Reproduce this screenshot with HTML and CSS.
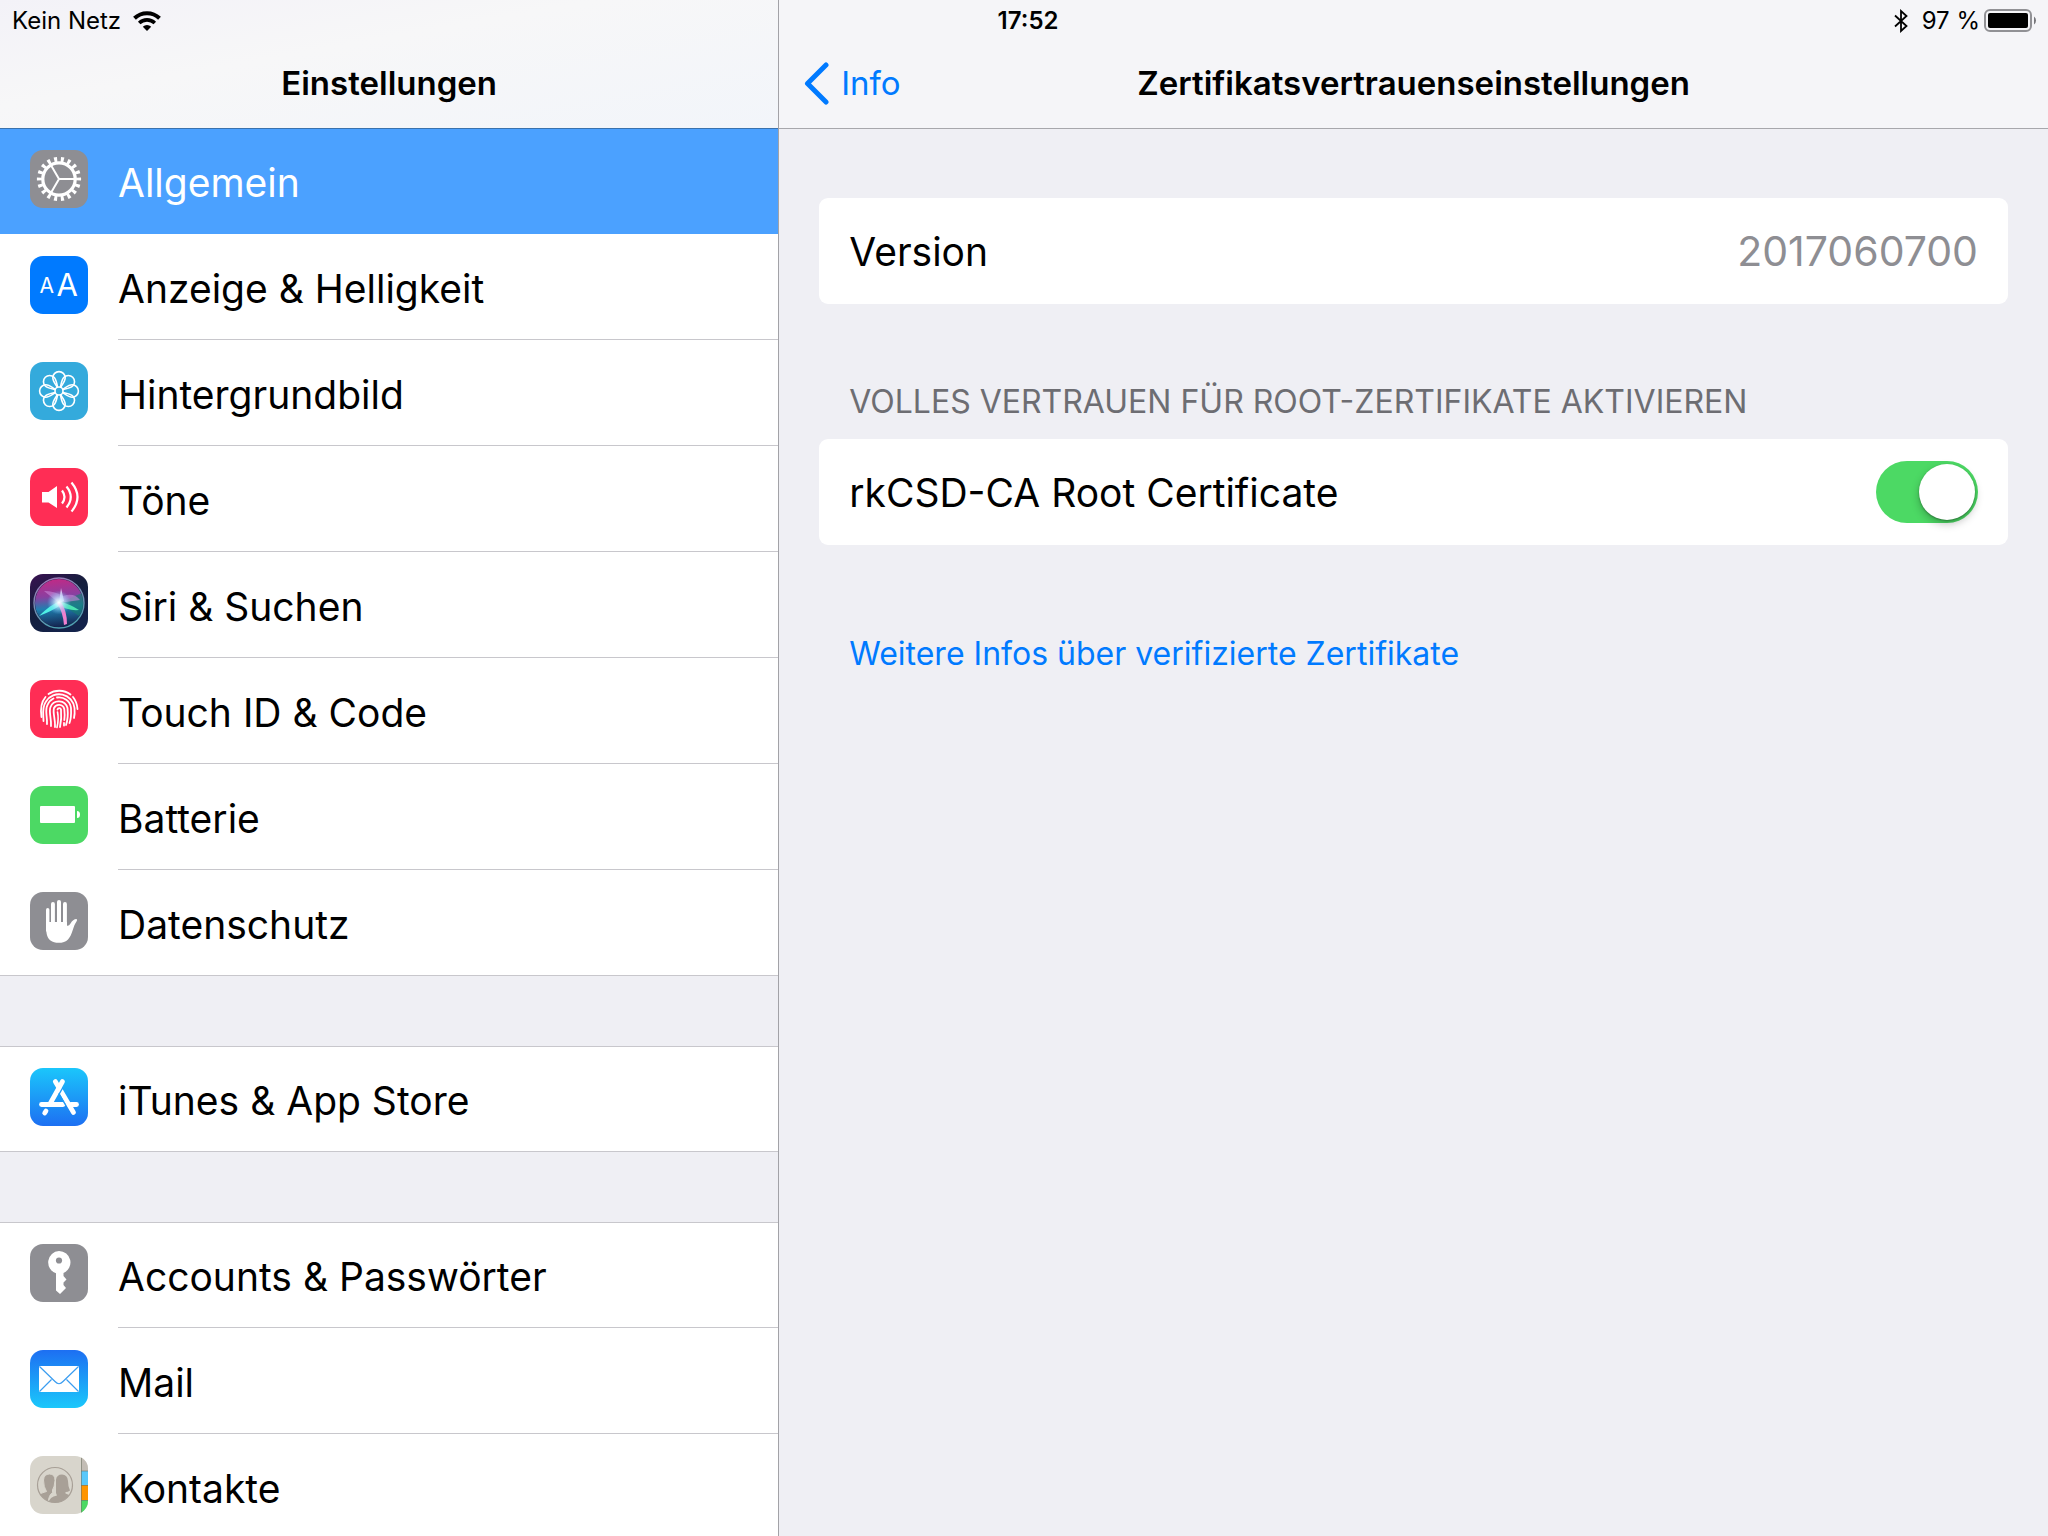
FILE: index.html
```html
<!DOCTYPE html>
<html lang="de">
  <head>
    <meta charset="UTF-8" />
    <meta name="viewport" content="width=device-width, initial-scale=1.0" />
    <title>Einstellungen</title>
    <link rel="stylesheet" href="styles.css">
  </head>
  <body>
    <div class="status-bar">
      <div class="status-left">
        <span>Kein Netz</span>
        <svg class="wifi" width="28" height="20" viewBox="0 0 28 20" aria-hidden="true">
          <path d="M1.5 7.2 A18 18 0 0 1 26.5 7.2" fill="none" stroke="#000" stroke-width="4" />
          <path d="M6.2 12 A11.3 11.3 0 0 1 21.8 12" fill="none" stroke="#000" stroke-width="3.6" />
          <path d="M14 20 L9.8 15.8 A6 6 0 0 1 18.2 15.8 Z" />
        </svg>
      </div>
      <time class="clock">17:52</time>
      <div class="status-right">
        <svg class="bluetooth" width="14" height="24" viewBox="0 0 14 24" aria-hidden="true">
          <path d="M1 6.5 L12.5 17 L7 22 V2 L12.5 7 L1 17.5" fill="none" stroke="#000" stroke-width="1.8" />
        </svg>
        <span>97 %</span>
        <svg class="battery" width="53" height="23" viewBox="0 0 53 23" aria-hidden="true">
          <rect x="1" y="1" width="46" height="21" rx="5" fill="none" stroke="#919195" stroke-width="2" />
          <rect x="4" y="4" width="40" height="15" rx="2" />
          <path d="M50 7.5 a5 5 0 0 1 0 8 Z" fill="#77777b" />
        </svg>
      </div>
    </div>

    <div class="split">
      <aside class="sidebar">
        <header class="navbar sidebar-navbar">
          <h1>Einstellungen</h1>
        </header>
        <nav>
          <ul class="group">
            <li>
              <a class="row active" href="#allgemein">
                <svg class="icon" viewBox="0 0 58 58" aria-hidden="true">
                  <rect width="58" height="58" rx="13" fill="#8e8e93" />
                  <g fill="none" stroke="#fff">
                    <circle cx="29" cy="29" r="19.6" stroke-width="5" pathLength="180" stroke-dasharray="4.4 5.6" stroke-dashoffset="2.2" />
                    <circle cx="29" cy="29" r="16.2" stroke-width="3.2" />
                    <path d="M29 29 H45 M29 29 L21 15.2 M29 29 L21 42.8" stroke-width="2" />
                  </g>
                </svg>
                <span>Allgemein</span>
              </a>
            </li>
            <li>
              <a class="row" href="#anzeige">
                <svg class="icon" viewBox="0 0 58 58" aria-hidden="true">
                  <rect width="58" height="58" rx="13" fill="#007aff" />
                  <text class="icon-text" x="9.5" y="37" font-size="21">A</text>
                  <text class="icon-text" x="26.5" y="40" font-size="31">A</text>
                </svg>
                <span>Anzeige &amp; Helligkeit</span>
              </a>
            </li>
            <li>
              <a class="row" href="#hintergrundbild">
                <svg class="icon" viewBox="0 0 58 58" aria-hidden="true">
                  <defs>
                    <path id="petal" d="M29 9.6 A6.2 6.2 0 0 1 35.2 15.8 C35.2 19.5 32.5 22 29 28 C25.5 22 22.8 19.5 22.8 15.8 A6.2 6.2 0 0 1 29 9.6 Z" />
                  </defs>
                  <rect width="58" height="58" rx="13" fill="#34aadc" />
                  <g fill="none" stroke="#fff" stroke-width="1.6">
                    <use href="#petal" />
                    <use href="#petal" transform="rotate(45 29 29)" />
                    <use href="#petal" transform="rotate(90 29 29)" />
                    <use href="#petal" transform="rotate(135 29 29)" />
                    <use href="#petal" transform="rotate(180 29 29)" />
                    <use href="#petal" transform="rotate(225 29 29)" />
                    <use href="#petal" transform="rotate(270 29 29)" />
                    <use href="#petal" transform="rotate(315 29 29)" />
                    <circle cx="29" cy="29" r="4" fill="#34aadc" />
                  </g>
                </svg>
                <span>Hintergrundbild</span>
              </a>
            </li>
            <li>
              <a class="row" href="#toene">
                <svg class="icon" viewBox="0 0 58 58" aria-hidden="true">
                  <rect width="58" height="58" rx="13" fill="#ff2d55" />
                  <path d="M12 24 H18.5 L27 18 V40 L18.5 34.5 H12 Z" fill="#fff" />
                  <g fill="none" stroke="#fff" stroke-width="2.2">
                    <path d="M32 22.5 Q37 29 32 35.5" />
                    <path d="M36.5 18.5 Q45 29 36.5 39.5" />
                    <path d="M41.5 14.5 Q53.5 29 41.5 43.5" />
                  </g>
                </svg>
                <span>Töne</span>
              </a>
            </li>
            <li>
              <a class="row" href="#siri">
                <svg class="icon" viewBox="0 0 58 58" aria-hidden="true">
                  <defs>
                    <linearGradient id="siri-bg" x1="0" y1="0" x2="0.6" y2="1">
                      <stop offset="0" stop-color="#3a1152" />
                      <stop offset="0.5" stop-color="#141e3c" />
                      <stop offset="1" stop-color="#13224a" />
                    </linearGradient>
                    <linearGradient id="siri-orb" x1="0.4" y1="0" x2="0.5" y2="1">
                      <stop offset="0" stop-color="#c02a86" />
                      <stop offset="0.35" stop-color="#8a3fa0" />
                      <stop offset="0.6" stop-color="#1f7fb0" />
                      <stop offset="1" stop-color="#14234f" />
                    </linearGradient>
                    <radialGradient id="siri-glow">
                      <stop offset="0" stop-color="#fff" />
                      <stop offset="0.3" stop-color="#d5f4ff" stop-opacity="0.8" />
                      <stop offset="1" stop-color="#6fc6ff" stop-opacity="0" />
                    </radialGradient>
                    <linearGradient id="siri-ring" x1="0" y1="0" x2="0.3" y2="1">
                      <stop offset="0" stop-color="#a574b8" />
                      <stop offset="1" stop-color="#4f9fb0" />
                    </linearGradient>
                  </defs>
                  <rect width="58" height="58" rx="13" fill="url(#siri-bg)" />
                  <circle cx="29" cy="29" r="24" fill="url(#siri-orb)" />
                  <path d="M29 29 L52 19 A24 24 0 0 1 49 42 Z" fill="#16806f" opacity="0.6" />
                  <path d="M29 29 L14 17 Q24 17 33 22 Q44 18 50 26 Z" fill="#c887d8" opacity="0.6" />
                  <path d="M29 29 L31 14 L34 27 Z" fill="#f3ddff" opacity="0.8" />
                  <path d="M30 27 Q20 31 9 42 Q22 37 31 31 Z" fill="#4ff0e4" />
                  <path d="M28 27 Q40 30 49 36 Q38 37 28 31 Z" fill="#4be3b2" />
                  <path d="M27 29 Q33 38 34 51 L37 50 Q37 37 31 28 Z" fill="#f080cf" />
                  <circle cx="29" cy="28.5" r="12" fill="url(#siri-glow)" />
                  <circle cx="29" cy="29" r="25" fill="none" stroke="url(#siri-ring)" stroke-width="1.4" />
                </svg>
                <span>Siri &amp; Suchen</span>
              </a>
            </li>
            <li>
              <a class="row" href="#touchid">
                <svg class="icon" viewBox="0 0 58 58" aria-hidden="true">
                  <rect width="58" height="58" rx="13" fill="#ff2d55" />
                  <g fill="none" stroke="#fff" stroke-width="1.8" stroke-linecap="round">
                    <path d="M18.5 14 A19 19 0 0 1 40.5 14.5" />
                    <path d="M43 17 Q47 22 47.5 29" />
                    <path d="M11.5 37 Q9.5 24 15.5 17" />
                    <path d="M13.5 41 C13.5 35 11.5 28 16 21.5 A15.5 15.5 0 0 1 44.5 28 Q45 34 44 38" />
                    <path d="M17 44 C17.5 36 14.5 30 17.5 25 A12.3 12.3 0 0 1 23.5 18.5" />
                    <path d="M27 17.5 A12 12 0 0 1 41 28 Q41.5 38 39.5 43" />
                    <path d="M21 46 C21.5 38 18.5 32 20.5 27 A9 9 0 0 1 37.5 28 Q38.5 38 36 45" />
                    <path d="M25 47 C25.5 39 22.5 33 24 28 A5.5 5.5 0 0 1 34.3 29 Q35 35 34.3 40" />
                    <path d="M34 43 V45.5" />
                    <path d="M27.5 29.5 A1.8 1.8 0 0 1 31 29.5 Q31.8 39 30 47" />
                    <path d="M27.5 32 Q29 39 27 47.5" stroke-width="1.6" />
                  </g>
                </svg>
                <span>Touch ID &amp; Code</span>
              </a>
            </li>
            <li>
              <a class="row" href="#batterie">
                <svg class="icon" viewBox="0 0 58 58" aria-hidden="true">
                  <rect width="58" height="58" rx="13" fill="#4cd964" />
                  <rect x="10" y="20" width="35" height="17" rx="1" fill="#fff" />
                  <path d="M47 25 Q50 25 50 28.5 Q50 32 47 32 Z" fill="#fff" />
                </svg>
                <span>Batterie</span>
              </a>
            </li>
            <li>
              <a class="row" href="#datenschutz">
                <svg class="icon" viewBox="0 0 58 58" aria-hidden="true">
                  <rect width="58" height="58" rx="13" fill="#8e8e93" />
                  <g fill="#fff">
                    <rect x="16" y="16" width="3.4" height="24" rx="1.7" />
                    <rect x="21" y="10" width="3.9" height="30" rx="1.9" />
                    <rect x="27" y="8" width="4" height="30" rx="2" />
                    <rect x="33" y="10" width="3.9" height="30" rx="1.9" />
                    <path d="M16 30 H36.9 V33.5 Q38.5 34.5 40.5 31.5 Q43 27 46.5 27 Q47.8 27.8 46.5 29.5 C43 34 42.5 43 38 47.5 C34.5 51.5 25 52 20.5 48.5 C16.5 45.5 16 40 16 30 Z" />
                  </g>
                </svg>
                <span>Datenschutz</span>
              </a>
            </li>
          </ul>
          <ul class="group">
            <li>
              <a class="row" href="#appstore">
                <svg class="icon" viewBox="0 0 58 58" aria-hidden="true">
                  <defs>
                    <linearGradient id="store-bg" x1="0" y1="0" x2="0" y2="1">
                      <stop offset="0" stop-color="#1bc6fb" />
                      <stop offset="1" stop-color="#1d6ff2" />
                    </linearGradient>
                  </defs>
                  <rect width="58" height="58" rx="13" fill="url(#store-bg)" />
                  <g fill="none" stroke="#fff" stroke-width="4.8" stroke-linecap="round">
                    <path d="M32.5 13.5 L20.5 35" />
                    <path d="M16 43 L14.7 45" />
                    <path d="M11.5 36.5 H33" />
                    <path d="M41 36.5 H46.5" />
                    <path d="M25.3 13.5 L43.5 44.5" />
                  </g>
                  <path d="M32.6 20 L29.2 26 L35.8 37.5" fill="none" stroke="#1c9af7" stroke-width="1.4" />
                </svg>
                <span>iTunes &amp; App Store</span>
              </a>
            </li>
          </ul>
          <ul class="group">
            <li>
              <a class="row" href="#accounts">
                <svg class="icon" viewBox="0 0 58 58" aria-hidden="true">
                  <rect width="58" height="58" rx="13" fill="#8e8e93" />
                  <path d="M29 7 A11.4 11.4 0 0 1 33.5 28.9 V32 L36.5 35.5 L33.5 38.5 V41 L36 44 L30 50 L26 46.5 V29.2 A11.4 11.4 0 0 1 29 7 Z" fill="#fff" />
                  <circle cx="29" cy="16.5" r="3.1" fill="#8e8e93" />
                </svg>
                <span>Accounts &amp; Passwörter</span>
              </a>
            </li>
            <li>
              <a class="row" href="#mail">
                <svg class="icon" viewBox="0 0 58 58" aria-hidden="true">
                  <defs>
                    <linearGradient id="mail-bg" x1="0" y1="0" x2="0" y2="1">
                      <stop offset="0" stop-color="#1d6ff2" />
                      <stop offset="1" stop-color="#1bc8fb" />
                    </linearGradient>
                  </defs>
                  <rect width="58" height="58" rx="13" fill="url(#mail-bg)" />
                  <rect x="9" y="16" width="40" height="26" rx="1" fill="#fff" />
                  <path d="M9.5 16.5 L25 31.5 Q29 36 33 31.5 L48.5 16.5 M9.5 41.5 L21.5 29.5 M48.5 41.5 L36.5 29.5" fill="none" stroke="#3b9df0" stroke-width="1.2" />
                </svg>
                <span>Mail</span>
              </a>
            </li>
            <li>
              <a class="row" href="#kontakte">
                <svg class="icon" viewBox="0 0 58 58" aria-hidden="true">
                  <defs>
                    <clipPath id="contacts-clip"><rect width="58" height="58" rx="13" /></clipPath>
                    <clipPath id="people-clip"><circle cx="25" cy="29" r="17.5" /></clipPath>
                  </defs>
                  <g clip-path="url(#contacts-clip)">
                    <rect width="58" height="58" fill="#d8d5cc" />
                    <rect x="51" y="0" width="7" height="15" fill="#c3bdb5" />
                    <rect x="51" y="15" width="7" height="14" fill="#5ac8fa" />
                    <rect x="51" y="29" width="7" height="15" fill="#ff9500" />
                    <rect x="51" y="44" width="7" height="14" fill="#4cd964" />
                    <path d="M51.5 0 V58 M51 15 H58 M51 29.5 H58 M51 44.5 H58" stroke="#6f7466" stroke-opacity="0.6" fill="none" />
                  </g>
                  <g clip-path="url(#people-clip)" fill="#a8a097">
                    <path d="M26 37 V24 Q26.5 18.5 32 18.5 Q37.5 18.5 38 25 Q38 31 40 34.5 Q38 36 35.5 36 V37.5 Q43 39.5 43 48 H18 Q19 41 27 39.5 Z" />
                    <path d="M7 48 V40 Q10 37 16.5 35.5 Q13.5 31 13.5 24 Q14 18 19.5 18 Q25 18 25 24.5 Q24.5 31 22.5 34 V36.5 Q18.5 39 18 48 Z" stroke="#d8d5cc" />
                  </g>
                  <circle cx="25" cy="29" r="17.5" fill="none" stroke="#a8a097" stroke-width="1.2" />
                </svg>
                <span>Kontakte</span>
              </a>
            </li>
          </ul>
        </nav>
      </aside>

      <main class="detail">
        <header class="navbar detail-navbar">
          <a class="back" href="#info">
            <svg width="25" height="43" viewBox="0 0 25 43" aria-hidden="true">
              <path d="M22 3 L3.5 21.5 L22 40" fill="none" stroke="#007aff" stroke-width="5" stroke-linecap="round" stroke-linejoin="round" />
            </svg>
            Info
          </a>
          <h2>Zertifikatsvertrauenseinstellungen</h2>
        </header>
        <div class="content">
          <div class="card">
            <span>Version</span>
            <span class="value">2017060700</span>
          </div>
          <h3 class="section-title">VOLLES VERTRAUEN FÜR ROOT-ZERTIFIKATE AKTIVIEREN</h3>
          <div class="card">
            <label for="rootCert">rkCSD-CA Root Certificate</label>
            <input class="switch" type="checkbox" role="switch" id="rootCert" name="rootCert" checked />
          </div>
          <a class="more" href="#mehr">Weitere Infos über verifizierte Zertifikate</a>
        </div>
      </main>
    </div>
  </body>
</html>
```

FILE: styles.css
```css
* {
  box-sizing: border-box;
}
body {
  margin: 0;
  height: 100vh;
  overflow: hidden;
  font-family: Inter, "Liberation Sans", sans-serif;
  font-size: 39px;
  color: #000;
  background-color: #efeff4;
}
a {
  color: #007aff;
  text-decoration: none;
}
h1,
h2,
h3,
ul {
  margin: 0;
  padding: 0;
}
svg {
  display: block;
  flex-shrink: 0;
}

/* status bar, floats over both panes */
.status-bar {
  position: absolute;
  top: 0;
  left: 0;
  right: 0;
  height: 41px;
  padding: 0 4px 0 12px;
  display: grid;
  grid-template-columns: 1fr auto 1fr;
  align-items: center;
  font-size: 24px;
}
.status-left,
.status-right {
  display: flex;
  align-items: center;
}
.status-left {
  gap: 12px;
}
.status-right {
  justify-content: flex-end;
  gap: 4px;
  padding-right: 7px;
}
.bluetooth {
  margin-right: 10px;
}
.clock {
  font-weight: 600;
}

.split {
  display: grid;
  grid-template-columns: 38% 1fr;
  height: 100%;
}
.navbar {
  height: 128px;
  padding-top: 38px;
  display: grid;
  grid-template-columns: 1fr auto 1fr;
  align-items: center;
}
.navbar h1,
.navbar h2 {
  grid-column: 2;
  font-size: 33px;
  font-weight: 600;
}

/* sidebar */
.sidebar {
  overflow: hidden;
}
.sidebar-navbar {
  background: linear-gradient(170deg, #f3f2f8, #f7f7f8 40%, #f2f5fa);
}
.group {
  list-style: none;
  margin-bottom: 70px;
  background-color: #fff;
}
.row {
  display: flex;
  height: 106px;
  padding-left: 30px;
  gap: 30px;
  color: #000;
}
.row span {
  flex: 1;
  display: flex;
  align-items: center;
  padding-top: 3px;
  border-bottom: 1px solid #c8c7cc;
}
.icon {
  width: 58px;
  height: 58px;
  margin-top: 22px;
}
.icon-text {
  fill: #fff;
}
.group li:first-child .row {
  box-shadow: inset 0 1px #c8c7cc;
}
.group li:last-child .row {
  box-shadow: inset 0 -1px #c8c7cc;
}
.group li:only-child .row {
  box-shadow: inset 0 1px #c8c7cc, inset 0 -1px #c8c7cc;
}
.group li:first-child .active {
  color: #fff;
  background-color: #4ba1ff;
  box-shadow: inset 0 1px #3a72ad;
}
.active span {
  border-color: transparent;
}

/* detail pane */
.detail {
  border-left: 1px solid #a2a2a7;
}
.detail-navbar {
  height: 129px;
  background-color: #f5f5f8;
  border-bottom: 1px solid #a7a7ac;
}
.back {
  display: flex;
  align-items: center;
  gap: 12px;
  padding-left: 25px;
  font-size: 33px;
}
.content {
  padding: 69px 40px 0;
}
.card {
  display: flex;
  align-items: center;
  justify-content: space-between;
  height: 106px;
  padding: 0 30px;
  background-color: #fff;
  border-radius: 9px;
}
.value {
  font-size: 41px;
  color: #8e8e93;
}
.section-title {
  margin: 78px 30px 17px;
  font-size: 32px;
  font-weight: 400;
  line-height: 40px;
  color: #6d6d72;
}
.switch {
  appearance: none;
  display: flex;
  width: 102px;
  height: 62px;
  margin: 0;
  padding: 3px;
  border-radius: 31px;
  background-color: #e5e5ea;
  cursor: pointer;
}
.switch::before {
  content: "";
  width: 56px;
  height: 56px;
  border-radius: 50%;
  background-color: #fff;
  box-shadow: 0 4px 8px rgba(0, 0, 0, 0.25), 0 1px 2px rgba(0, 0, 0, 0.3);
}
.switch:checked {
  justify-content: flex-end;
  background-color: #4cd964;
}
.more {
  display: inline-block;
  margin: 89px 30px 0;
  font-size: 32px;
  line-height: 40px;
}
```
